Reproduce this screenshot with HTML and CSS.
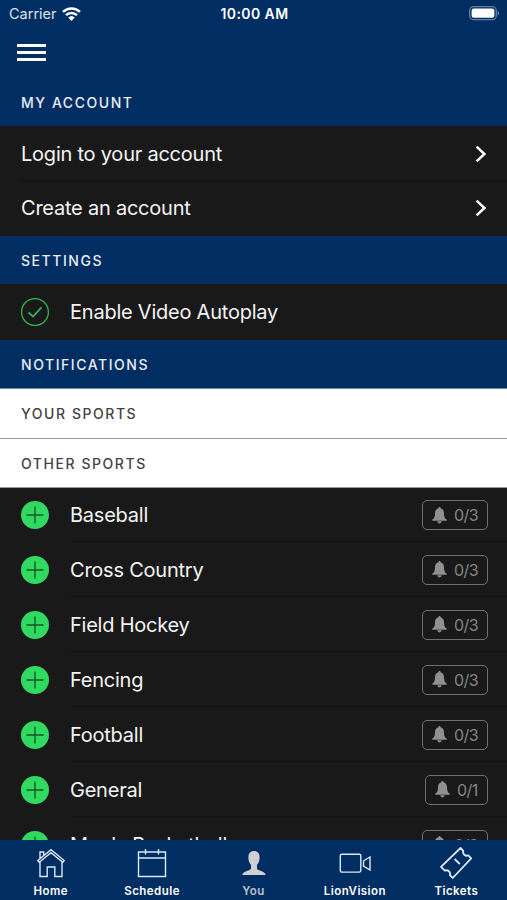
FILE: index.html
```html
<!DOCTYPE html>
<html lang="en">
<head>
    <meta charset="UTF-8">
    <meta name="viewport" content="width=device-width, initial-scale=1.0">
    <title>You</title>
    <link rel="stylesheet" href="styles.css">
</head>
<body>
    <!-- Shared icons -->
    <svg class="icon-defs">
        <symbol id="chevron" viewBox="0 0 12 18">
            <path d="M1.6 1.6 9.4 9 1.6 16.4" fill="none" stroke="#fff" stroke-width="2.5"/>
        </symbol>
        <symbol id="plus" viewBox="0 0 28 28">
            <circle cx="14" cy="14" r="14" fill="#30d95f"/>
            <path d="M14 5.5v17M5.5 14h17" stroke="#135526" stroke-width="1.3"/>
        </symbol>
        <symbol id="bell" viewBox="0 0 15 17">
            <path d="M7.5 0C6.900 0 6.400.5 6.400 1.200 4.100 1.800 3 3.700 3 6.200 3 9.800 2.300 11.500.3 12.500V13.800H14.700V12.500C12.700 11.500 12 9.800 12 6.200 12 3.700 10.900 1.800 8.600 1.200 8.600.5 8.100 0 7.500 0Z" fill="#909090"/>
            <path d="M5.300 14.300h4.400a2.200 2.100 0 0 1-4.400 0z" fill="#909090"/>
        </symbol>
    </svg>

    <div class="app">
        <header>
            <div class="status-bar">
                <div class="carrier">
                    Carrier
                    <svg width="19" height="14" viewBox="0 0 19 14" fill="none" stroke="#fff" stroke-width="2.5">
                        <path d="M1 4.900a12.200 12.200 0 0 1 17 0M4 8.200a8 8 0 0 1 11 0"/>
                        <path d="M6.200 10.600a4.800 4.800 0 0 1 6.600 0L9.500 14z" fill="#fff" stroke="none"/>
                    </svg>
                </div>
                <div class="time">10:00 AM</div>
                <svg class="battery" width="31" height="15" viewBox="0 0 31 15">
                    <rect x=".7" y=".7" width="26.600" height="13" rx="4" fill="none" stroke="#66819f" stroke-width="1.300"/>
                    <rect x="2.600" y="2.600" width="22.800" height="9.200" rx="2.200" fill="#fff"/>
                    <path d="M28.600 5v4.600c2-.8 2-3.800 0-4.600z" fill="#66819f"/>
                </svg>
            </div>
            <div class="menu-button">
                <span></span>
                <span></span>
                <span></span>
            </div>
        </header>

        <main>
            <h2 class="section-title">MY ACCOUNT</h2>
            <div class="link-row divided">
                Login to your account
                <svg class="chevron"><use href="#chevron"/></svg>
            </div>
            <div class="link-row create-row">
                Create an account
                <svg class="chevron"><use href="#chevron"/></svg>
            </div>

            <h2 class="section-title">SETTINGS</h2>
            <div class="setting-row">
                <svg class="row-icon" viewBox="0 0 28 28" fill="none" stroke="#2fb552">
                    <circle cx="14" cy="14" r="13.400" stroke-width="1.300"/>
                    <path d="M7.500 14.300 12 18.500 20.500 9.300" stroke-width="1.800"/>
                </svg>
                Enable Video Autoplay
            </div>

            <h2 class="section-title">NOTIFICATIONS</h2>
            <h3 class="sub-title your-sports">YOUR SPORTS</h3>
            <h3 class="sub-title other-sports">OTHER SPORTS</h3>

            <div class="sport-row first">
                <svg class="row-icon"><use href="#plus"/></svg>
                <div class="sport-name">Baseball</div>
                <div class="alert-count"><svg class="bell"><use href="#bell"/></svg>0/3</div>
            </div>
            <div class="sport-row">
                <svg class="row-icon"><use href="#plus"/></svg>
                <div class="sport-name">Cross Country</div>
                <div class="alert-count"><svg class="bell"><use href="#bell"/></svg>0/3</div>
            </div>
            <div class="sport-row">
                <svg class="row-icon"><use href="#plus"/></svg>
                <div class="sport-name">Field Hockey</div>
                <div class="alert-count"><svg class="bell"><use href="#bell"/></svg>0/3</div>
            </div>
            <div class="sport-row">
                <svg class="row-icon"><use href="#plus"/></svg>
                <div class="sport-name">Fencing</div>
                <div class="alert-count"><svg class="bell"><use href="#bell"/></svg>0/3</div>
            </div>
            <div class="sport-row">
                <svg class="row-icon"><use href="#plus"/></svg>
                <div class="sport-name">Football</div>
                <div class="alert-count"><svg class="bell"><use href="#bell"/></svg>0/3</div>
            </div>
            <div class="sport-row">
                <svg class="row-icon"><use href="#plus"/></svg>
                <div class="sport-name">General</div>
                <div class="alert-count single"><svg class="bell"><use href="#bell"/></svg>0/1</div>
            </div>
            <div class="sport-row">
                <svg class="row-icon"><use href="#plus"/></svg>
                <div class="sport-name">Men's Basketball</div>
                <div class="alert-count"><svg class="bell"><use href="#bell"/></svg>0/3</div>
            </div>
        </main>

        <nav class="tab-bar">
            <div class="tab">
                <svg viewBox="0 0 32 32">
                    <path d="M2.800 13.500 16 2.600l13.200 10.900-1.400 1.800L16 5.700 4.200 15.300zM5 14.800V29.500h7.200V20h7.600v9.500H27V14.800M5 11.500V5h3.700v3.500"/>
                </svg>
                Home
            </div>
            <div class="tab">
                <svg viewBox="0 0 32 32">
                    <path d="M2.500 5h27v24.500h-27zM2.500 11h27M9.500 2v5.500M22.500 2v5.500"/>
                </svg>
                Schedule
            </div>
            <div class="tab active">
                <svg viewBox="0 0 32 32">
                    <path d="M16 4c-3.600 0-5.600 2.400-5.600 6.200 0 3.600 1 6.200 2.600 7.600v4c-1 2-7.600 2-8.800 6.200h23.600c-1.200-4.200-7.800-4.200-8.800-6.200v-4c1.600-1.400 2.600-4 2.600-7.600C21.600 6.400 19.600 4 16 4z"/>
                </svg>
                You
            </div>
            <div class="tab">
                <svg viewBox="0 0 32 32">
                    <rect x="1.300" y="7.300" width="20.500" height="17.800" rx="1.500"/>
                    <path d="M24.500 14 31 10v13l-6.500-4z"/>
                </svg>
                LionVision
            </div>
            <div class="tab">
                <svg class="ticket" viewBox="0 0 32 32">
                    <path d="M20.500 1 23.300 3.800c-1 3.200 2 5.800 5 4.600L31.200 11.300 12.700 31 9.900 28.200c1-3.200-2-5.800-5-4.600L1 19.800zM14.600 12l5.200 5"/>
                </svg>
                Tickets
            </div>
        </nav>
    </div>
</body>
</html>
```
FILE: styles.css
```css
* {
    box-sizing: border-box;
}

body {
    margin: 0;
    font-family: Inter, "Liberation Sans", sans-serif;
    background-color: #191919;
    color: #f4f4f4;
}

.icon-defs {
    display: none;
}

.app {
    display: flex;
    flex-direction: column;
    height: 900px;
    overflow: hidden;
}

header {
    flex: none;
    height: 78px;
    background-color: #002d62;
}

.status-bar {
    display: grid;
    grid-template-columns: 1fr auto 1fr;
    align-items: center;
    height: 27px;
    padding: 0 7px 0 9px;
    font-size: 14.5px;
}

.carrier {
    display: flex;
    align-items: center;
    gap: 5px;
    color: #dce4ed;
}

.time {
    font-weight: 600;
    font-size: 14px;
    letter-spacing: 0.4px;
    color: #fff;
}

.battery {
    justify-self: end;
}

.menu-button {
    display: flex;
    flex-direction: column;
    gap: 4px;
    width: 29px;
    margin: 17px 0 0 17px;
}

.menu-button span {
    height: 3px;
    background-color: #fff;
}

main {
    flex: 1;
    min-height: 0;
    overflow: hidden;
}

.section-title, .sub-title {
    display: flex;
    align-items: center;
    margin: 0;
    padding-left: 21px;
    font-size: 14px;
    font-weight: 500;
    letter-spacing: 1.55px;
}

.section-title {
    height: 48px;
    background-color: #002d62;
    color: #e8eef5;
}

.sub-title {
    height: 50px;
    background-color: #fff;
    color: #444;
    border-top: 1px solid #999;
}

.your-sports {
    border-top-color: #6c86a6;
}

.other-sports {
    border-bottom: 1px solid #999;
}

.link-row, .setting-row, .sport-row {
    display: flex;
    align-items: center;
    font-size: 20px;
    letter-spacing: -0.23px;
}

.link-row {
    justify-content: space-between;
    height: 55px;
    padding: 0 20px 0 21px;
}

.create-row {
    padding-bottom: 1px;
}

.divided {
    background: linear-gradient(#101010, #101010) 21px 100% / 100% 1px no-repeat;
}

.chevron {
    width: 12px;
    height: 18px;
}

.setting-row {
    height: 56px;
    padding-left: 21px;
    gap: 21px;
}

.row-icon {
    flex: none;
    width: 28px;
    height: 28px;
}

.sport-row {
    height: 55px;
    padding: 0 19px 0 21px;
    gap: 21px;
    background: linear-gradient(#131313, #131313) 70px 100% / 100% 1px no-repeat;
}

.first {
    height: 54px;
}

.sport-name {
    flex: 1;
}

.alert-count {
    display: flex;
    align-items: center;
    gap: 7px;
    width: 66px;
    height: 30px;
    padding-left: 9px;
    border: 1.5px solid #707070;
    border-radius: 5px;
    font-size: 16px;
    letter-spacing: -0.5px;
    color: #858585;
}

.single {
    width: 63px;
}

.bell {
    width: 15px;
    height: 17px;
}

.tab-bar {
    flex: none;
    display: flex;
    height: 60px;
    background-color: #002d62;
}

.tab {
    flex: 1;
    display: flex;
    flex-direction: column;
    align-items: center;
    padding-top: 7px;
    font-size: 11.5px;
    font-weight: 600;
    letter-spacing: 0.45px;
    line-height: 14px;
    color: #fff;
}

.tab svg {
    width: 32px;
    height: 32px;
    margin-bottom: 5px;
    fill: none;
    stroke: #dce8f5;
    stroke-width: 1.4;
}

.tab .ticket {
    stroke-width: 1.8;
    stroke-linejoin: round;
}

.active {
    color: #bdc5cf;
}

.tab.active svg {
    fill: #d0d0d0;
    stroke: none;
}
```
